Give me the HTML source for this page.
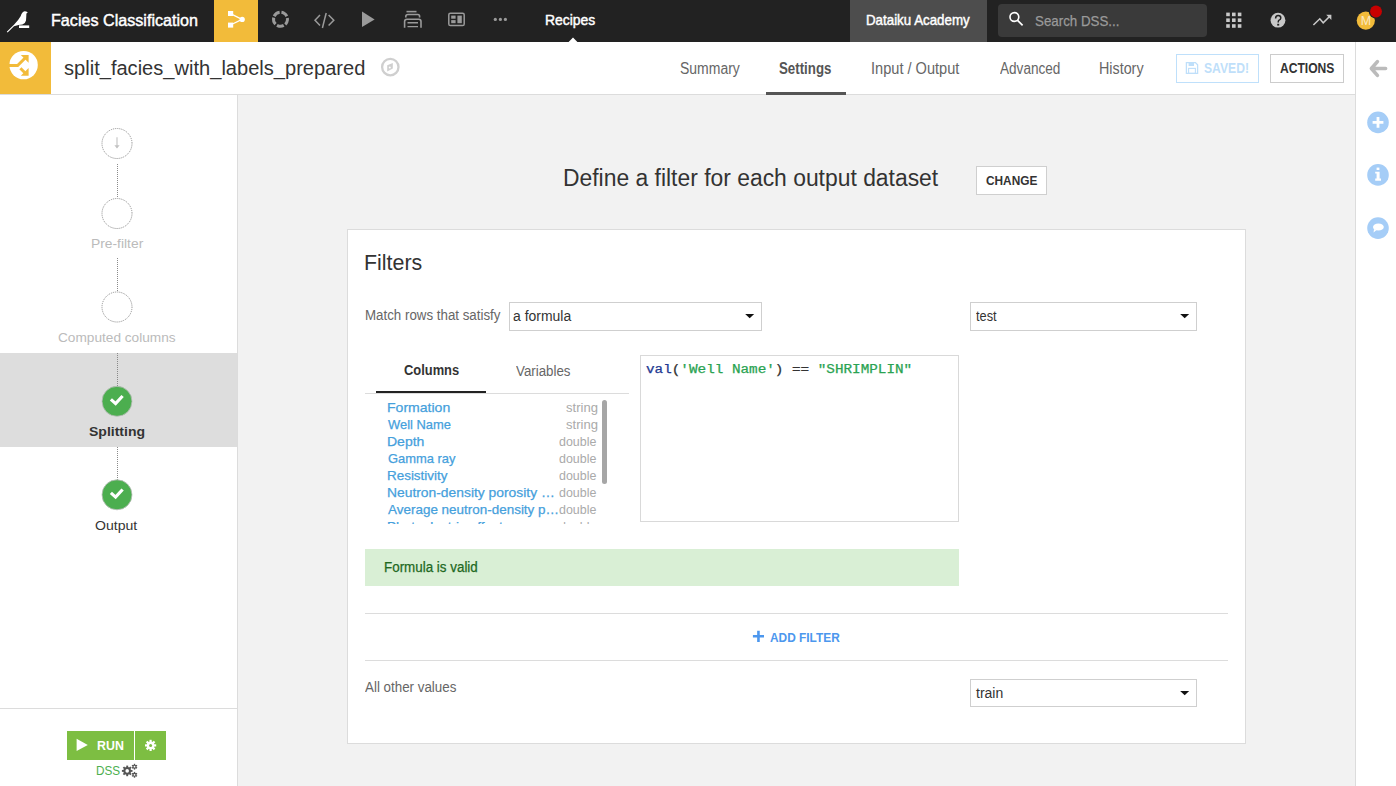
<!DOCTYPE html>
<html><head><meta charset="utf-8"><title>split_facies_with_labels_prepared</title>
<style>
html,body{margin:0;padding:0;}
body{width:1396px;height:786px;overflow:hidden;position:relative;background:#f2f2f2;font-family:'Liberation Sans',sans-serif;}
.t{position:absolute;white-space:pre;transform-origin:0 0;}
.b{position:absolute;box-sizing:border-box;}
svg{position:absolute;overflow:visible;}
</style></head><body>
<!-- top nav -->
<div class=b style="left:0;top:0;width:1396px;height:42px;background:#222"></div>
<svg style="left:0;top:0" width="45" height="42" viewBox="0 0 45 42"><path d="M6.8,31.8 L14.2,24.4 Q18.4,20.2 20.6,16.2 Q22,11.8 24.6,11.2 Q26.4,11.3 27.8,12.4 L26.4,13.6 Q26.3,17 26,20.4 Q25.3,23.8 22.4,24.6 L18.5,25.1 L14,26.2 L7.6,32.4 Z" fill="#fff"/><rect x="19" y="25.4" width="10.2" height="2.6" fill="#fff"/></svg>
<div class=t style="left:50.63px;top:13px;font:400 16.6px/16.6px 'Liberation Sans', sans-serif;color:#fff;transform:scaleX(0.9720);-webkit-text-stroke:0.45px currentColor;">Facies Classification</div>
<div class=b style="left:214px;top:0;width:44px;height:42px;background:#f2bb3a"></div>
<svg style="left:214px;top:0" width="44" height="42" viewBox="214 0 44 42"><line x1="230.5" y1="13.6" x2="242" y2="19.4" stroke="#fff" stroke-width="1.2"/><line x1="230.5" y1="25" x2="242" y2="19.4" stroke="#fff" stroke-width="1.2"/><rect x="228" y="11" width="5.2" height="5" fill="#fff"/><rect x="228" y="22.6" width="5.2" height="5" fill="#fff"/><circle cx="242.2" cy="19.4" r="2.6" fill="#fff"/></svg>
<svg style="left:268px;top:7px" width="24" height="24" viewBox="268 7 24 24"><circle cx="280.5" cy="19.2" r="7" fill="none" stroke="#9a9a9a" stroke-width="3" stroke-dasharray="7 1.8" transform="rotate(205 280.5 19.2)"/></svg>
<svg style="left:310px;top:10px" width="28" height="22" viewBox="310 10 28 22"><polyline points="320,15 315,20.2 320,25.6" fill="none" stroke="#9a9a9a" stroke-width="1.5"/><polyline points="328.6,15 333.8,20.2 328.6,25.6" fill="none" stroke="#9a9a9a" stroke-width="1.5"/><line x1="326.2" y1="13" x2="322.4" y2="28" stroke="#9a9a9a" stroke-width="1.5"/></svg>
<svg style="left:360px;top:10px" width="20" height="20" viewBox="360 10 20 20"><polygon points="362,11.4 374.6,19.4 362,27" fill="#9a9a9a"/></svg>
<svg style="left:402px;top:9px" width="22" height="22" viewBox="402 9 22 22"><path d="M406.5,11.6 H416.5" stroke="#9a9a9a" stroke-width="1.6" fill="none"/><path d="M405.8,17.4 V16.5 Q405.8,14.5 408,14.5 H417.8 Q419.6,14.5 419.6,16.5 V17.4" stroke="#9a9a9a" stroke-width="1.6" fill="none"/><path d="M404.6,27.8 V21.6 Q404.6,19.2 407,19.2 H418.8 Q421,19.2 421,21.6 V27.8" stroke="#9a9a9a" stroke-width="1.6" fill="none"/><path d="M407.5,22.8 H418 M407.5,26.6 H418" stroke="#9a9a9a" stroke-width="1.4" fill="none"/></svg>
<svg style="left:446px;top:10px" width="22" height="20" viewBox="446 10 22 20"><rect x="448.8" y="13.2" width="15.4" height="12.4" rx="1.6" fill="none" stroke="#9a9a9a" stroke-width="1.5"/><rect x="451.2" y="15.6" width="4.4" height="3.1" fill="#9a9a9a"/><rect x="451.2" y="20.1" width="4.4" height="3.1" fill="#9a9a9a"/><rect x="457.4" y="15.6" width="4.4" height="7.6" fill="#9a9a9a"/></svg>
<svg style="left:490px;top:15px" width="20" height="10" viewBox="490 15 20 10"><circle cx="495.3" cy="19.4" r="1.6" fill="#9a9a9a"/><circle cx="500.4" cy="19.4" r="1.6" fill="#9a9a9a"/><circle cx="505.4" cy="19.4" r="1.6" fill="#9a9a9a"/></svg>
<div class=t style="left:545.17px;top:12px;font:400 15px/15px 'Liberation Sans', sans-serif;color:#fff;transform:scaleX(0.9264);-webkit-text-stroke:0.45px currentColor;">Recipes</div>
<svg style="left:566px;top:36px" width="14" height="7" viewBox="566 36 14 7"><polygon points="568.6,42 573,37.6 577.4,42" fill="#fff"/></svg>
<div class=b style="left:850px;top:0;width:137px;height:42px;background:#4d4d4d"></div>
<div class=t style="left:865.77px;top:13px;font:400 14.4px/14.4px 'Liberation Sans', sans-serif;color:#fff;transform:scaleX(0.9261);-webkit-text-stroke:0.45px currentColor;">Dataiku Academy</div>
<div class=b style="left:998px;top:4px;width:209px;height:33px;background:#3a3a3a;border-radius:4px"></div>
<svg style="left:1005px;top:8px" width="22" height="22" viewBox="1005 8 22 22"><circle cx="1014.4" cy="17" r="4.4" fill="none" stroke="#fff" stroke-width="1.6"/><line x1="1017.6" y1="20.3" x2="1022.6" y2="25.4" stroke="#fff" stroke-width="1.7"/></svg>
<div class=t style="left:1034.71px;top:13px;font:400 15px/15px 'Liberation Sans', sans-serif;color:#9a9a9a;transform:scaleX(0.8882);-webkit-text-stroke:0.25px currentColor;">Search DSS...</div>
<svg style="left:1224px;top:10px" width="20" height="20" viewBox="1224 10 20 20"><g fill="#c8c8c8"><rect x="1226.2" y="12.6" width="3.6" height="3.6"/><rect x="1232" y="12.6" width="3.6" height="3.6"/><rect x="1237.8" y="12.6" width="3.6" height="3.6"/><rect x="1226.2" y="18.4" width="3.6" height="3.6"/><rect x="1232" y="18.4" width="3.6" height="3.6"/><rect x="1237.8" y="18.4" width="3.6" height="3.6"/><rect x="1226.2" y="24.2" width="3.6" height="3.6"/><rect x="1232" y="24.2" width="3.6" height="3.6"/><rect x="1237.8" y="24.2" width="3.6" height="3.6"/></g></svg>
<svg style="left:1268px;top:10px" width="20" height="20" viewBox="1268 10 20 20"><circle cx="1278" cy="20.2" r="7.4" fill="#c8c8c8"/><path d="M1275.6,18.6 Q1275.6,15.6 1278.2,15.6 Q1280.8,15.6 1280.8,18 Q1280.8,19.6 1278.8,20.4 Q1278.2,20.8 1278.2,22.4" fill="none" stroke="#222" stroke-width="1.5"/><rect x="1277.2" y="23.8" width="2" height="1.8" fill="#222"/></svg>
<svg style="left:1310px;top:12px" width="24" height="16" viewBox="1310 12 24 16"><polyline points="1313.4,25 1319.8,18.8 1323.2,22.8 1329.8,16.2" fill="none" stroke="#c8c8c8" stroke-width="1.6"/><polygon points="1331.4,14.8 1331.4,20 1326.2,14.8" fill="#c8c8c8"/></svg>
<svg style="left:1352px;top:2px" width="40" height="34" viewBox="1352 2 40 34"><circle cx="1365.8" cy="20.6" r="9.1" fill="#f2bb3a"/><text x="1366" y="25.4" text-anchor="middle" font-family="Liberation Sans" font-size="12.5" fill="#fbe9c4">M</text><circle cx="1376" cy="11.5" r="7.2" fill="#222"/><circle cx="1376" cy="11.5" r="5.9" fill="#c80000"/></svg>

<!-- second bar -->
<div class=b style="left:0;top:42px;width:1396px;height:53px;background:#fff;border-bottom:1px solid #dcdcdc"></div>
<div class=b style="left:0;top:42px;width:51px;height:52px;background:#f2bb3a"></div>
<svg style="left:0;top:42px" width="51" height="52" viewBox="0 42 51 52"><circle cx="23.6" cy="65.1" r="14.2" fill="#fff"/><path d="M9,65.6 H17.6 L25.4,57.8" fill="none" stroke="#f2bb3a" stroke-width="3"/><polygon points="20.8,55 28.6,55 28.6,62.8" fill="#f2bb3a"/><path d="M20.4,68.2 L25.4,73.2" stroke="#f2bb3a" stroke-width="3"/><polygon points="20.8,75.8 28.6,75.8 28.6,68" fill="#f2bb3a"/></svg>
<div class=t style="left:63.60px;top:58px;font:400 20px/20px 'Liberation Sans', sans-serif;color:#333;transform:scaleX(1.0040);">split_facies_with_labels_prepared</div>
<svg style="left:378px;top:55px" width="25" height="25" viewBox="378 55 25 25"><circle cx="390.3" cy="67.1" r="8.2" fill="none" stroke="#cfcfcf" stroke-width="2.3"/><polygon points="387.2,65.2 392.8,63 392.8,68.6 387.2,71.6" fill="#cfcfcf"/><circle cx="389.8" cy="67.6" r="1" fill="#fff"/></svg>
<div class=t style="left:680.31px;top:61px;font:400 15.8px/15.8px 'Liberation Sans', sans-serif;color:#666;transform:scaleX(0.8851);">Summary</div>
<div class=t style="left:779.16px;top:61px;font:700 15.8px/15.8px 'Liberation Sans', sans-serif;color:#555;transform:scaleX(0.8410);">Settings</div>
<div class=b style="left:766px;top:92px;width:80px;height:2.5px;background:#555"></div>
<div class=t style="left:870.58px;top:61px;font:400 15.8px/15.8px 'Liberation Sans', sans-serif;color:#666;transform:scaleX(0.9232);">Input / Output</div>
<div class=t style="left:999.60px;top:61px;font:400 15.8px/15.8px 'Liberation Sans', sans-serif;color:#666;transform:scaleX(0.8594);">Advanced</div>
<div class=t style="left:1098.89px;top:61px;font:400 15.8px/15.8px 'Liberation Sans', sans-serif;color:#666;transform:scaleX(0.9062);">History</div>
<div class=b style="left:1176px;top:54px;width:83px;height:28.5px;border:1px solid #bfe0fb;background:#fff"></div>
<svg style="left:1184px;top:60px" width="16" height="16" viewBox="1184 60 16 16"><path d="M1186.4,62.6 H1195.4 L1197.6,64.8 V73.4 H1186.4 Z" fill="none" stroke="#bfdffa" stroke-width="1.3"/><rect x="1188.6" y="62.6" width="5.4" height="3.4" fill="#bfdffa"/><rect x="1188.6" y="68.4" width="6.8" height="5" fill="none" stroke="#bfdffa" stroke-width="1.1"/></svg>
<div class=t style="left:1204.00px;top:60px;font:700 15.2px/15.2px 'Liberation Sans', sans-serif;color:#bfdffa;transform:scaleX(0.8000);">SAVED!</div>
<div class=b style="left:1270px;top:54px;width:74px;height:28.5px;border:1px solid #cccccc;background:#fff"></div>
<div class=t style="left:1279.60px;top:60px;font:700 15.2px/15.2px 'Liberation Sans', sans-serif;color:#333;transform:scaleX(0.7956);">ACTIONS</div>

<!-- right strip -->
<div class=b style="left:1355px;top:42px;width:41px;height:744px;background:#fff;border-left:1px solid #dcdcdc"></div>
<svg style="left:1366px;top:56px" width="24" height="24" viewBox="1366 56 24 24"><path d="M1377.4,61.6 L1371.4,68.5 L1377.4,75.4 M1372.4,68.5 H1385.6" fill="none" stroke="#bbb" stroke-width="3.6" stroke-linecap="round" stroke-linejoin="round"/></svg>
<svg style="left:1364px;top:108px" width="28" height="134" viewBox="1364 108 28 134"><circle cx="1378" cy="122.4" r="10.8" fill="#a5cdf7"/><path d="M1372.6,122.4 H1383.4 M1378,117 V127.8" stroke="#fff" stroke-width="2.8"/><circle cx="1378" cy="174.9" r="10.8" fill="#a5cdf7"/><rect x="1376.6" y="167.6" width="2.8" height="2.4" fill="#fff"/><path d="M1375.2,171.8 H1379.6 V178.6 H1381 V180.8 H1375.2 V178.6 H1376.6 V173.6 H1375.2 Z" fill="#fff"/><circle cx="1378" cy="228.1" r="10.8" fill="#a5cdf7"/><ellipse cx="1378.4" cy="227" rx="5.4" ry="3.6" fill="#fff"/><polygon points="1374,229 1376.6,230 1373.6,232.6" fill="#fff"/></svg>

<!-- left panel -->
<div class=b style="left:0;top:95px;width:238px;height:691px;background:#fff;border-right:1px solid #dcdcdc"></div>
<div class=b style="left:0;top:353px;width:237px;height:94px;background:#dddddd"></div>
<svg style="left:95px;top:120px" width="44" height="400" viewBox="95 120 44 400">
<g fill="none" stroke="#8a8a8a" stroke-width="1" stroke-dasharray="1 1">
<circle cx="117" cy="143.5" r="15"/>
<circle cx="117" cy="213.5" r="15"/>
<circle cx="117" cy="307" r="15"/>
<line x1="117.5" y1="164" x2="117.5" y2="198"/>
<line x1="117.5" y1="258" x2="117.5" y2="292"/>
<line x1="117.5" y1="353" x2="117.5" y2="386"/>
<line x1="117.5" y1="447" x2="117.5" y2="480"/>
</g>
<path d="M117,137.2 V147.6" fill="none" stroke="#c2c2c2" stroke-width="1.1"/><polygon points="114.4,145.2 119.6,145.2 117,148.6" fill="#c2c2c2"/>
<circle cx="117" cy="401.3" r="15" fill="#4cae4f" stroke="#bdbdbd" stroke-width="0.8"/>
<polyline points="110.9,399.4 115.6,403.6 122.6,396" fill="none" stroke="#fff" stroke-width="3.2"/>
<circle cx="117" cy="494.8" r="15" fill="#4cae4f" stroke="#bdbdbd" stroke-width="0.8"/>
<polyline points="110.9,492.9 115.6,497.1 122.6,489.5" fill="none" stroke="#fff" stroke-width="3.2"/>
</svg>
<div class=t style="left:90.78px;top:237px;font:400 13.5px/13.5px 'Liberation Sans', sans-serif;color:#bbb;transform:scaleX(1.0240);">Pre-filter</div>
<div class=t style="left:57.79px;top:331px;font:400 13.5px/13.5px 'Liberation Sans', sans-serif;color:#bbb;transform:scaleX(1.0113);">Computed columns</div>
<div class=t style="left:89.06px;top:425px;font:700 13.5px/13.5px 'Liberation Sans', sans-serif;color:#333;transform:scaleX(1.0385);">Splitting</div>
<div class=t style="left:95.36px;top:519px;font:400 13.5px/13.5px 'Liberation Sans', sans-serif;color:#333;transform:scaleX(1.0400);">Output</div>
<div class=b style="left:0;top:708px;width:237px;height:1px;background:#dcdcdc"></div>
<div class=b style="left:67px;top:731px;width:67px;height:29px;background:#7dbe42"></div>
<div class=b style="left:135px;top:731px;width:31px;height:29px;background:#7dbe42"></div>
<svg style="left:74px;top:736px" width="18" height="18" viewBox="74 736 18 18"><polygon points="76.6,738.8 87.8,745 76.6,751" fill="#fff"/></svg>
<div class=t style="left:96.78px;top:739px;font:700 13.5px/13.5px 'Liberation Sans', sans-serif;color:#fff;transform:scaleX(0.9179);">RUN</div>
<svg style="left:143px;top:738px" width="16" height="16" viewBox="143 738 16 16"><g transform="translate(150.6 745.4)"><circle r="3.8" fill="#fff"/><g fill="#fff"><rect x="-1.1" y="-5.6" width="2.2" height="11.2"/><rect x="-1.1" y="-5.6" width="2.2" height="11.2" transform="rotate(45)"/><rect x="-1.1" y="-5.6" width="2.2" height="11.2" transform="rotate(90)"/><rect x="-1.1" y="-5.6" width="2.2" height="11.2" transform="rotate(135)"/></g><circle r="1.5" fill="#7dbe42"/></g></svg>
<div class=t style="left:95.53px;top:764px;font:400 13.5px/13.5px 'Liberation Sans', sans-serif;color:#4caf50;transform:scaleX(0.8692);">DSS</div>
<svg style="left:120px;top:762px" width="20" height="18" viewBox="120 762 20 18"><g fill="#555"><g transform="translate(127.2 770.9)"><circle r="3.8"/><rect x="-0.95" y="-5.3" width="1.9" height="10.6"/><rect x="-0.95" y="-5.3" width="1.9" height="10.6" transform="rotate(45)"/><rect x="-0.95" y="-5.3" width="1.9" height="10.6" transform="rotate(90)"/><rect x="-0.95" y="-5.3" width="1.9" height="10.6" transform="rotate(135)"/><circle r="1.8" fill="#fff"/></g><g transform="translate(134.5 766.7)"><circle r="2"/><rect x="-0.7" y="-2.9" width="1.4" height="5.8"/><rect x="-0.7" y="-2.9" width="1.4" height="5.8" transform="rotate(60)"/><rect x="-0.7" y="-2.9" width="1.4" height="5.8" transform="rotate(120)"/><circle r="0.9" fill="#fff"/></g><g transform="translate(134.5 774.8)"><circle r="2"/><rect x="-0.7" y="-2.9" width="1.4" height="5.8"/><rect x="-0.7" y="-2.9" width="1.4" height="5.8" transform="rotate(60)"/><rect x="-0.7" y="-2.9" width="1.4" height="5.8" transform="rotate(120)"/><circle r="0.9" fill="#fff"/></g></g></svg>

<!-- main -->
<div class=t style="left:562.51px;top:167px;font:400 23px/23px 'Liberation Sans', sans-serif;color:#333;transform:scaleX(0.9947);">Define a filter for each output dataset</div>
<div class=b style="left:976px;top:166px;width:71px;height:29px;background:#fff;border:1px solid #cfcfcf"></div>
<div class=t style="left:986.00px;top:174px;font:700 13px/13px 'Liberation Sans', sans-serif;color:#333;transform:scaleX(0.9107);">CHANGE</div>
<div class=b style="left:347px;top:229px;width:899px;height:515px;background:#fff;border:1px solid #dcdcdc"></div>
<div class=t style="left:364.36px;top:252px;font:400 22px/22px 'Liberation Sans', sans-serif;color:#333;transform:scaleX(0.9719);">Filters</div>
<div class=t style="left:365.05px;top:308px;font:400 14px/14px 'Liberation Sans', sans-serif;color:#666;transform:scaleX(0.9514);">Match rows that satisfy</div>
<div class=b style="left:509px;top:302px;width:253px;height:29px;background:#fff;border:1px solid #cfcfcf"></div>
<div class=t style="left:513.40px;top:309px;font:400 14px/14px 'Liberation Sans', sans-serif;color:#333;transform:scaleX(0.9965);">a formula</div>
<svg style="left:740px;top:310px" width="20" height="12" viewBox="740 310 20 12"><polygon points="745.2,314 754.2,314 749.7,318.2" fill="#111"/></svg>
<div class=b style="left:970px;top:302px;width:227px;height:29px;background:#fff;border:1px solid #cfcfcf"></div>
<div class=t style="left:976.00px;top:309px;font:400 14px/14px 'Liberation Sans', sans-serif;color:#333;transform:scaleX(0.9130);">test</div>
<svg style="left:1175px;top:310px" width="20" height="12" viewBox="1175 310 20 12"><polygon points="1180.2,314 1189.2,314 1184.7,318.2" fill="#111"/></svg>
<div class=t style="left:403.58px;top:363px;font:700 14px/14px 'Liberation Sans', sans-serif;color:#333;transform:scaleX(0.9207);">Columns</div>
<div class=t style="left:516.40px;top:364px;font:400 14px/14px 'Liberation Sans', sans-serif;color:#666;transform:scaleX(0.9509);">Variables</div>
<div class=b style="left:365px;top:393px;width:264px;height:1px;background:#dcdcdc"></div>
<div class=b style="left:376px;top:390.5px;width:110px;height:2.5px;background:#222"></div>
<div class=b style="left:365px;top:398px;width:250px;height:126px;overflow:hidden">
<div class=b style="left:-365px;top:-398px;width:1396px;height:786px">
<div class=t style="left:386.66px;top:401px;font:400 13.5px/13.5px 'Liberation Sans', sans-serif;color:#45a0dc;transform:scaleX(1.0407);-webkit-text-stroke:0.25px currentColor;">Formation</div><div class=t style="left:387.70px;top:418px;font:400 13.5px/13.5px 'Liberation Sans', sans-serif;color:#45a0dc;transform:scaleX(0.9561);-webkit-text-stroke:0.25px currentColor;">Well Name</div><div class=t style="left:386.66px;top:435px;font:400 13.5px/13.5px 'Liberation Sans', sans-serif;color:#45a0dc;transform:scaleX(1.0382);-webkit-text-stroke:0.25px currentColor;">Depth</div><div class=t style="left:387.70px;top:452px;font:400 13.5px/13.5px 'Liberation Sans', sans-serif;color:#45a0dc;transform:scaleX(0.9563);-webkit-text-stroke:0.25px currentColor;">Gamma ray</div><div class=t style="left:386.70px;top:469px;font:400 13.5px/13.5px 'Liberation Sans', sans-serif;color:#45a0dc;transform:scaleX(0.9950);-webkit-text-stroke:0.25px currentColor;">Resistivity</div><div class=t style="left:386.67px;top:486px;font:400 13.5px/13.5px 'Liberation Sans', sans-serif;color:#45a0dc;transform:scaleX(1.0255);-webkit-text-stroke:0.25px currentColor;">Neutron-density porosity …</div><div class=t style="left:387.70px;top:503px;font:400 13.5px/13.5px 'Liberation Sans', sans-serif;color:#45a0dc;transform:scaleX(0.9965);-webkit-text-stroke:0.25px currentColor;">Average neutron-density p…</div><div class=t style="left:386.69px;top:520px;font:400 13.5px/13.5px 'Liberation Sans', sans-serif;color:#45a0dc;transform:scaleX(1.0114);-webkit-text-stroke:0.25px currentColor;">Photoelectric effect</div>
<div class=t style="left:565.50px;top:401px;font:400 13px/13px 'Liberation Sans', sans-serif;color:#aaa;transform:scaleX(1.0033);">string</div><div class=t style="left:565.50px;top:418px;font:400 13px/13px 'Liberation Sans', sans-serif;color:#aaa;transform:scaleX(1.0033);">string</div><div class=t style="left:559.30px;top:435px;font:400 13px/13px 'Liberation Sans', sans-serif;color:#aaa;transform:scaleX(0.9564);">double</div><div class=t style="left:559.30px;top:452px;font:400 13px/13px 'Liberation Sans', sans-serif;color:#aaa;transform:scaleX(0.9564);">double</div><div class=t style="left:559.30px;top:469px;font:400 13px/13px 'Liberation Sans', sans-serif;color:#aaa;transform:scaleX(0.9564);">double</div><div class=t style="left:559.30px;top:486px;font:400 13px/13px 'Liberation Sans', sans-serif;color:#aaa;transform:scaleX(0.9564);">double</div><div class=t style="left:559.30px;top:503px;font:400 13px/13px 'Liberation Sans', sans-serif;color:#aaa;transform:scaleX(0.9564);">double</div><div class=t style="left:559.30px;top:520px;font:400 13px/13px 'Liberation Sans', sans-serif;color:#aaa;transform:scaleX(0.9564);">double</div>
</div></div>
<div class=b style="left:602px;top:400px;width:5px;height:84px;background:#a6a6a6;border-radius:2.5px"></div>
<div class=b style="left:640px;top:355px;width:319px;height:167px;background:#fff;border:1px solid #d9d9d9"></div>
<div class=t style="left:645.80px;top:364px;font:400 12.5px/12.5px 'Liberation Mono', monospace;color:#333;transform:scaleX(1.1446);-webkit-text-stroke:0.25px currentColor;"><span style='color:#1f3a93'>val</span>(<span style='color:#2aa352'>'Well Name'</span>) == <span style='color:#2aa352'>&quot;SHRIMPLIN&quot;</span></div>
<div class=b style="left:365px;top:549px;width:594px;height:37px;background:#d9efd5"></div>
<div class=t style="left:383.64px;top:560px;font:400 14px/14px 'Liberation Sans', sans-serif;color:#22691f;transform:scaleX(0.9567);-webkit-text-stroke:0.25px currentColor;">Formula is valid</div>
<div class=b style="left:365px;top:613px;width:863px;height:1px;background:#dcdcdc"></div>
<svg style="left:750px;top:628px" width="16" height="16" viewBox="750 628 16 16"><path d="M752.9,636.3 H764 M758.45,630.7 V641.9" stroke="#4c97ee" stroke-width="2.6"/></svg>
<div class=t style="left:770.30px;top:631px;font:700 13.5px/13.5px 'Liberation Sans', sans-serif;color:#4c97ee;transform:scaleX(0.8797);">ADD FILTER</div>
<div class=b style="left:365px;top:660px;width:863px;height:1px;background:#dcdcdc"></div>
<div class=t style="left:365.30px;top:680px;font:400 14px/14px 'Liberation Sans', sans-serif;color:#666;transform:scaleX(0.9547);">All other values</div>
<div class=b style="left:970px;top:679px;width:227px;height:28px;background:#fff;border:1px solid #cfcfcf"></div>
<div class=t style="left:976.00px;top:686px;font:400 14px/14px 'Liberation Sans', sans-serif;color:#333;transform:scaleX(1.0000);">train</div>
<svg style="left:1175px;top:687px" width="20" height="12" viewBox="1175 687 20 12"><polygon points="1180.2,691 1189.2,691 1184.7,695.2" fill="#111"/></svg>
</body></html>
